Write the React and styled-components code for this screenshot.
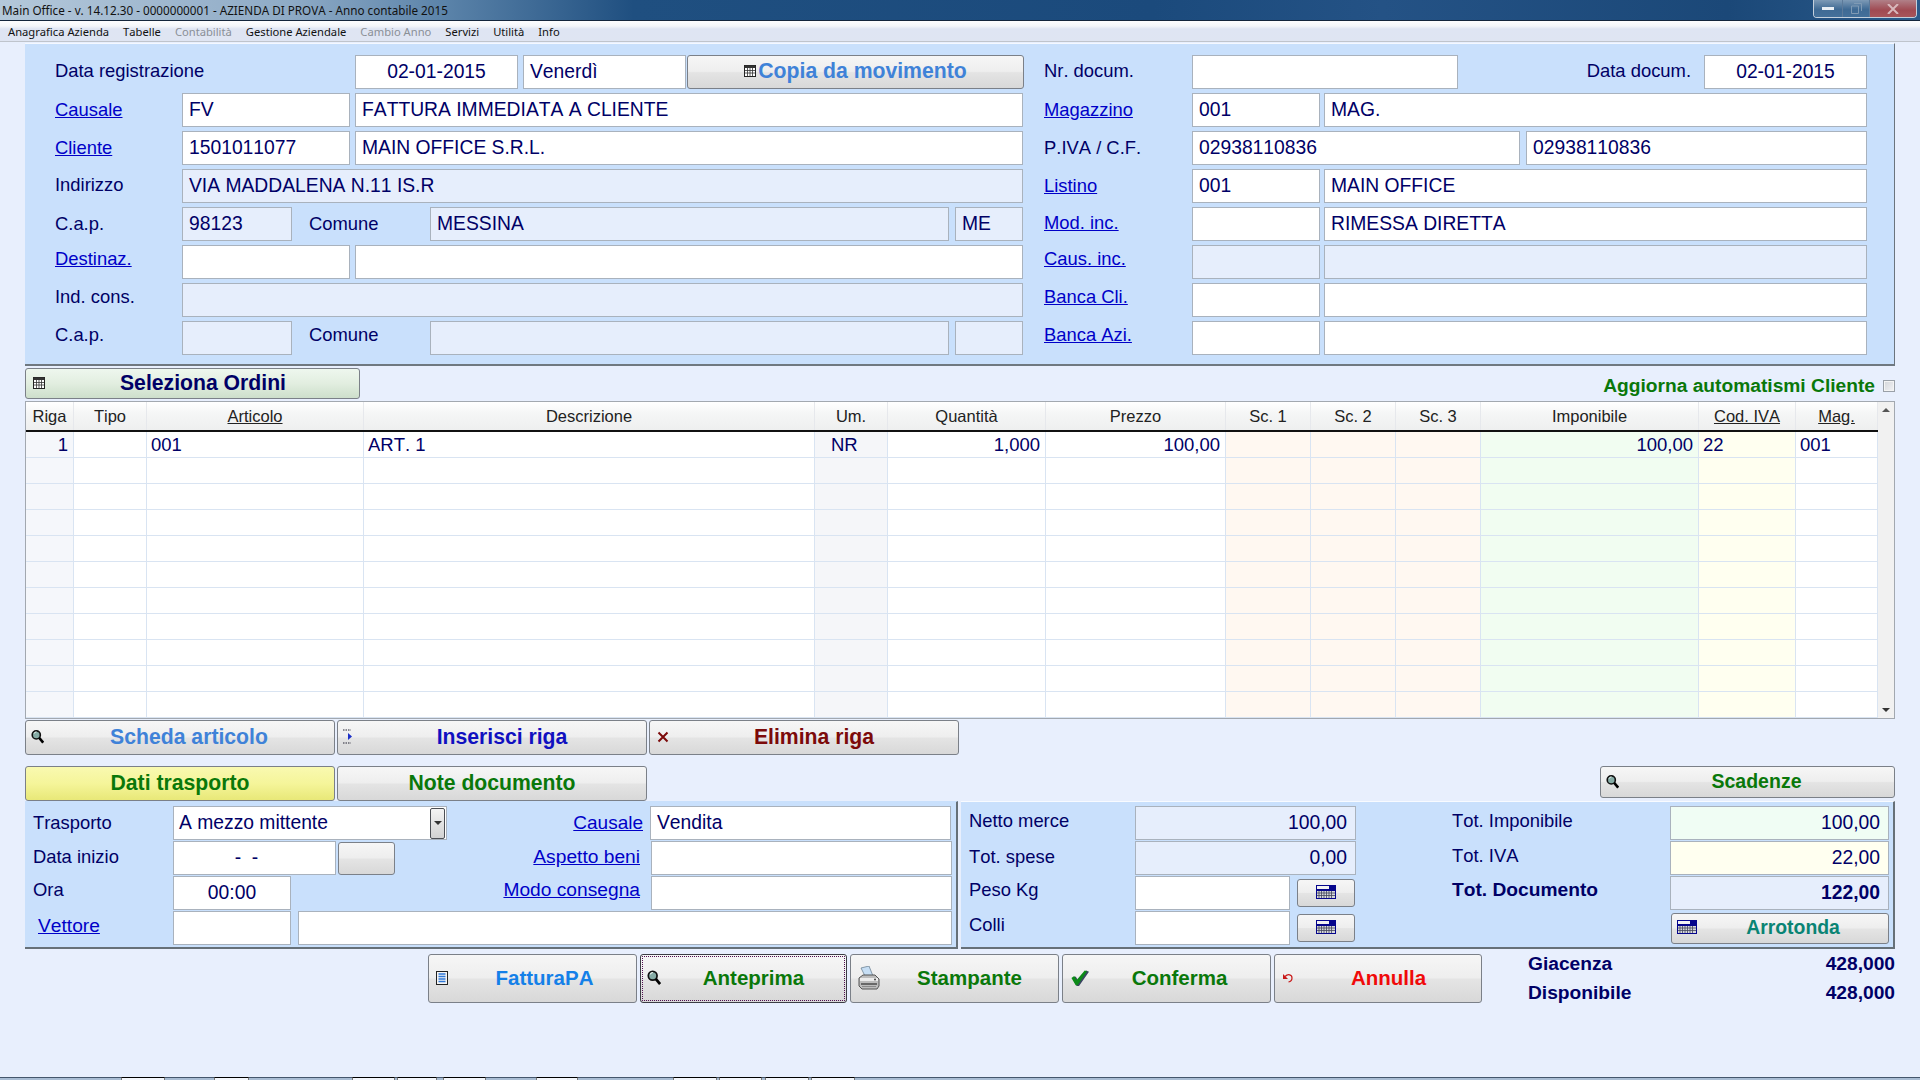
import React from 'react';
import styled, { createGlobalStyle } from 'styled-components';

const GlobalStyle = createGlobalStyle`
  * { box-sizing: border-box; font-kerning: none; }
  html, body { margin: 0; padding: 0; background: #e8effd; }
  body { font-family: "Liberation Sans", Arial, sans-serif; color: #000066; }
`;

const Page = styled.div`
  width: 1920px;
  height: 1080px;
  overflow: hidden;
  display: flex;
  flex-direction: column;
  background: #e8effd;
`;

const TitleBar = styled.div`
  height: 21px;
  display: flex;
  align-items: flex-start;
  padding-left: 2px;
  border-bottom: 1px solid #14263c;
  background: linear-gradient(90deg, #b4c8da 0%, #8fabc6 15%, #5c84aa 23%, #1f4f80 33%, #1b4a7c 60%, #245285 72%, #1b4878 90%, #2a5a8a 100%);
`;

const TitleText = styled.span`
  font-family: "Noto Sans", sans-serif;
  font-size: 11.7px;
  line-height: 20px;
  color: #111;
`;

const WinControls = styled.div`
  margin-left: auto;
  margin-right: 3px;
  display: flex;
  height: 18px;
  border: 1px solid #c4d0dc;
  border-top: none;
  border-radius: 0 0 4px 4px;
  overflow: hidden;
`;

const WinBtn = styled.div`
  width: ${p => p.$w}px;
  display: flex;
  align-items: center;
  justify-content: center;
  border-right: 1px solid #5c7a9a;
  background: ${p => p.$close
    ? 'linear-gradient(180deg, #b08088 0%, #a04a52 60%, #a8555a 100%)'
    : 'linear-gradient(180deg, #7d9ab6 0%, #3f6a94 55%, #44709a 100%)'};
  &:last-child { border-right: none; }
`;

const MenuBar = styled.div`
  height: 21px;
  display: flex;
  align-items: center;
  gap: 14px;
  padding-left: 8px;
  border-bottom: 1px solid #bfc4cc;
  background: linear-gradient(180deg, #fdfdfe 0%, #f4f6fa 25%, #dfe5f3 40%, #dfe5f2 100%);
`;

const MenuItem = styled.span`
  font-family: "Noto Sans", sans-serif;
  font-size: 11.2px;
  color: ${p => (p.$off ? '#8a8f96' : '#111')};
`;

const Content = styled.div`
  padding: 1px 25px 0;
  display: flex;
  flex-direction: column;
`;

const HeadPanel = styled.div`
  height: 323px;
  padding: 11px 27px 0 30px;
  display: flex;
  justify-content: space-between;
  background: #c9e0fc;
  border-top: 1px solid #f4f8ff;
  border-right: 1px solid #6b747e;
  border-bottom: 2px solid #6f7880;
`;

const FormCol = styled.div`
  width: ${p => p.$w}px;
  display: flex;
  flex-direction: column;
  gap: 4px;
`;

const FormRow = styled.div`
  height: 34px;
  display: flex;
  align-items: center;
`;

const Label = styled.div`
  width: ${p => p.$w}px;
  flex: none;
  margin-left: ${p => p.$ml || 0}px;
  padding-left: ${p => p.$pl || 0}px;
  padding-bottom: ${p => p.$pb || 0}px;
  font-size: ${p => p.$fs || 18.4}px;
  white-space: nowrap;
  text-align: ${p => p.$align || 'left'};
  font-weight: ${p => (p.$bold ? 'bold' : 'normal')};
  color: ${p => (p.$link ? '#0000c8' : '#000066')};
  text-decoration: ${p => (p.$link ? 'underline' : 'none')};
`;

const Field = styled.div`
  width: ${p => p.$w}px;
  height: 34px;
  flex: none;
  margin-left: ${p => p.$ml || 0}px;
  padding: 0 ${p => (p.$align === 'right' ? 8 : 6)}px;
  display: flex;
  align-items: center;
  justify-content: ${p => (p.$align === 'right' ? 'flex-end' : p.$align === 'center' ? 'center' : 'flex-start')};
  background: ${p => p.$bg || (p.$off ? '#e6eefc' : '#fff')};
  border: 1px solid #a9b2bd;
  font-size: 19.3px;
  font-weight: ${p => (p.$bold ? 'bold' : 'normal')};
  color: #000066;
  white-space: nowrap;
`;

const Btn = styled.button`
  width: ${p => (p.$w ? `${p.$w}px` : 'auto')};
  height: ${p => p.$h || 35}px;
  flex: none;
  margin: 0 0 0 ${p => p.$ml || 0}px;
  padding: 0 0 2px;
  display: flex;
  align-items: center;
  border: 1px solid ${p => (p.$focus ? '#3c3c44' : '#7b8088')};
  border-radius: 3px;
  background: ${p => {
    if (p.$tone === 'yellow') return 'linear-gradient(180deg, #f9f9b0 0%, #f5f59a 50%, #e8e878 100%)';
    if (p.$tone === 'green') return 'linear-gradient(180deg, #eef7ee 0%, #e2eee0 50%, #cddfcb 100%)';
    return 'linear-gradient(180deg, #f6f6f6 0%, #eeeeee 48%, #e4e4e4 52%, #d8d8d8 100%)';
  }};
  outline: ${p => (p.$focus ? '1px dotted #501050' : 'none')};
  outline-offset: -3px;
  font-family: "Liberation Sans", Arial, sans-serif;
  font-weight: bold;
  font-size: ${p => p.$fs || 21.2}px;
  color: ${p => p.$color || '#000066'};
`;

const BtnIcon = styled.span`
  width: ${p => p.$lead || 0}px;
  flex: none;
  display: flex;
  align-items: center;
  padding-left: ${p => (p.$pl === undefined ? 6 : p.$pl)}px;
  overflow: visible;
`;

const BtnText = styled.span`
  flex: 1;
  text-align: center;
  white-space: nowrap;
`;

const CopyBtnInner = styled.span`
  flex: 1;
  display: flex;
  align-items: center;
  justify-content: center;
  gap: 2px;
`;

const Toolbar = styled.div`
  margin-top: 2px;
  height: 31px;
  display: flex;
`;

const AutoFlag = styled.div`
  margin-left: auto;
  padding-top: 5px;
  display: flex;
  align-items: center;
  gap: 8px;
  font-size: 19.2px;
  font-weight: bold;
  color: #0a780a;
`;

const CheckBox = styled.span`
  width: 12px;
  height: 12px;
  border: 1px solid #9aa0a8;
  background: linear-gradient(135deg, #d4d6da, #f2f3f5);
  box-shadow: inset 0 0 0 1px #f4f4f4;
`;

const Table = styled.div`
  margin-top: 2px;
  height: 318px;
  display: flex;
  border: 1px solid #a2a8b0;
  background: #fff;
`;

const TableBody = styled.div`
  flex: 1;
  min-width: 0;
`;

const HeadRow = styled.div`
  height: 30px;
  display: flex;
  border-bottom: 2px solid #111;
`;

const HeadCell = styled.div`
  width: ${p => p.$w}px;
  flex: none;
  display: flex;
  align-items: center;
  justify-content: center;
  border-right: 1px solid #e6e8ec;
  background: linear-gradient(180deg, #ffffff 0%, #f5f6f6 40%, #eeefef 100%);
  font-size: 16.5px;
  color: #222;
  text-decoration: ${p => (p.$under ? 'underline' : 'none')};
`;

const DataRow = styled.div`
  height: 26px;
  display: flex;
`;

const DataCell = styled.div`
  width: ${p => p.$w}px;
  flex: none;
  padding: 0 ${p => (p.$right ? 5 : 4)}px 0 ${p => p.$indent || 4}px;
  display: flex;
  align-items: center;
  justify-content: ${p => (p.$right ? 'flex-end' : 'flex-start')};
  background: ${p => p.$bg || '#fff'};
  border-right: 1px solid #d9e4f2;
  border-bottom: 1px solid #d9e4f2;
  font-size: 18.5px;
  color: #000066;
`;

const ScrollTrack = styled.div`
  width: 16px;
  flex: none;
  display: flex;
  flex-direction: column;
  justify-content: space-between;
  align-items: center;
  padding: 6px 0;
  background: #f1f1f1;
`;

const ArrowUp = styled.span`
  width: 0;
  height: 0;
  border-left: 4px solid transparent;
  border-right: 4px solid transparent;
  border-bottom: 4px solid #555;
`;

const ArrowDown = styled.span`
  width: 0;
  height: 0;
  border-left: 4px solid transparent;
  border-right: 4px solid transparent;
  border-top: 4px solid #333;
`;

const BtnRow = styled.div`
  margin-top: 1px;
  display: flex;
  gap: 2px;
`;

const TabRow = styled.div`
  margin-top: 11px;
  height: 35px;
  display: flex;
  gap: 2px;
`;

const LowerPanels = styled.div`
  height: 148px;
  display: flex;
  gap: 3px;
`;

const LowerPanel = styled.div`
  width: ${p => p.$w}px;
  padding: 4px 0 0 ${p => p.$pl}px;
  display: flex;
  flex-direction: column;
  gap: 1px;
  background: #c9e0fc;
  border-top: 1px solid ${p => (p.$white ? '#f8fbff' : '#c9e0fc')};
  border-right: 2px solid #667078;
  border-bottom: 2px solid #667078;
`;

const Combo = styled(Field)`
  padding: 0 1px 0 5px;
  justify-content: space-between;
`;

const ComboBtn = styled.span`
  width: 15px;
  height: 31px;
  display: flex;
  align-items: center;
  justify-content: center;
  border: 1px solid #4c4f55;
  border-radius: 2px;
  background: linear-gradient(180deg, #f4f4f4, #d2d2d2);
`;

const ActionRow = styled.div`
  display: flex;
  align-items: flex-start;
`;

const Actions = styled.div`
  margin-top: 5px;
  margin-left: 403px;
  display: flex;
  gap: 3px;
`;

const Stock = styled.div`
  width: 367px;
  margin-left: 46px;
  display: flex;
  flex-direction: column;
`;

const StockLine = styled.div`
  height: 29px;
  display: flex;
  align-items: center;
  justify-content: space-between;
  font-size: 19.2px;
  font-weight: bold;
  color: #000066;
`;

const Footer = styled.div`
  margin-top: auto;
  height: 3px;
  display: flex;
  background: #a9bdd4;
  border-top: 1px solid #44566c;
`;

const FooterGap = styled.span`
  width: ${p => p.$w}px;
  flex: none;
`;

const FooterTab = styled.span`
  width: ${p => p.$w}px;
  flex: none;
  margin-top: -1px;
  background: #f4f7fc;
  border-top: 1px solid #000;
  border-left: 1px solid #777;
  border-right: 1px solid #777;
`;

const MagIcon = () => (
  <svg width="16" height="17" viewBox="0 0 16 17">
    <circle cx="6.500" cy="6.500" r="5" fill="#86aca6" stroke="#111" strokeWidth="2" />
    <path d="M3.800 5a3 3 0 0 1 3-2.200" fill="none" stroke="#eef6f2" strokeWidth="1.200" />
    <path d="M10 10L15 16" stroke="#000" strokeWidth="3.200" />
  </svg>
);

const GridIcon = () => (
  <svg width="12" height="12" viewBox="0 0 12 12">
    <rect x="0.5" y="0.5" width="11" height="11" fill="#fff" stroke="#222" />
    <rect x="0.5" y="0.5" width="11" height="2.5" fill="#333" />
    <path d="M3.500 3v8M6 3v8M8.500 3v8M1 5.500h10M1 8h10" stroke="#333" strokeWidth="0.8" />
  </svg>
);

const CalcIcon = () => (
  <svg width="20" height="14" viewBox="0 0 20 14">
    <rect width="20" height="14" fill="#05058c" />
    <rect x="1" y="1" width="12" height="3" fill="#f2f2f2" />
    <rect x="1" y="6" width="18" height="7" fill="#d6d8dc" />
    <path d="M3 6v7M5.500 6v7M8 6v7M10.500 6v7M13 6v7M15.500 6v7M1 8h18M1 10.500h18" stroke="#44465c" strokeWidth="0.8" />
  </svg>
);

const ListIcon = () => (
  <svg width="12" height="14" viewBox="0 0 12 14">
    <rect x="0.5" y="0.5" width="11" height="13" fill="#f4f4f4" stroke="#222" />
    <path d="M2.500 3h7M2.500 5.500h7M2.500 8h7M2.500 10.500h7" stroke="#2f78d8" strokeWidth="1.400" />
  </svg>
);

const InsertIcon = () => (
  <svg width="11" height="15" viewBox="0 0 11 15">
    <path d="M0 1h8M0 14h8" stroke="#223" strokeWidth="1" strokeDasharray="1.500 1" />
    <path d="M5 4l4 3.500-4 3.500z" fill="#1c30c8" />
  </svg>
);

const CrossIcon = () => (
  <svg width="12" height="12" viewBox="0 0 12 12">
    <path d="M1.500 1.500l9 9M10.500 1.500l-9 9" stroke="#7c0a0a" strokeWidth="2" />
  </svg>
);

const PrinterIcon = () => (
  <svg width="22" height="24" viewBox="0 0 22 24">
    <path d="M3 2l8-2 4 10H7z" fill="#c6def4" stroke="#6f8496" strokeWidth="0.800" />
    <path d="M1 12l4-3h12l4 4v7l-2 3H4l-3-3z" fill="#bdbdbd" stroke="#555" />
    <path d="M2 12h18v3H2z" fill="#ececec" />
    <path d="M3 18h16" stroke="#444" strokeWidth="1.400" />
    <path d="M4 20.500h14" stroke="#8a8a8a" strokeWidth="1" />
    <circle cx="17" cy="13.500" r="1" fill="#444" />
  </svg>
);

const CheckIcon = () => (
  <svg width="20" height="18" viewBox="0 0 20 18">
    <path d="M3 9.500l3-2 2.500 4L17 1l3 1.500L9.500 17.500H7z" fill="#3a4660" />
    <path d="M1.500 9l3-2 2.500 4L15.500 1l2.500 1L8 16.500H6z" fill="#0c8a18" />
  </svg>
);

const UndoIcon = () => (
  <svg width="12" height="10" viewBox="0 0 12 10">
    <path d="M3 3.500c3-3 7-2 7 1.500 0 2-1.500 3.500-3.500 4" fill="none" stroke="#c81818" strokeWidth="1.200" />
    <path d="M1 1v5h5z" fill="#c81818" />
  </svg>
);

const columns = [
  { w: 48, label: 'Riga', bg: '#f5f7fb', right: true },
  { w: 73, label: 'Tipo' },
  { w: 217, label: 'Articolo', under: true },
  { w: 451, label: 'Descrizione' },
  { w: 73, label: 'Um.', bg: '#f5f6f9', indent: 16 },
  { w: 158, label: 'Quantità', right: true },
  { w: 180, label: 'Prezzo', right: true },
  { w: 85, label: 'Sc. 1', bg: '#fff8f1' },
  { w: 85, label: 'Sc. 2', bg: '#fff8f1' },
  { w: 85, label: 'Sc. 3', bg: '#fff8f1' },
  { w: 218, label: 'Imponibile', bg: '#f1fdf1', right: true },
  { w: 97, label: 'Cod. IVA', bg: '#fffff0', under: true },
  { w: 82, label: 'Mag.', under: true },
];

const firstRow = ['1', '', '001', 'ART. 1', 'NR', '1,000', '100,00', '', '', '', '100,00', '22', '001'];
const rows = Array.from({ length: 11 }, (_, i) => (i === 0 ? firstRow : columns.map(() => '')));

const menu = [
  ['Anagrafica Azienda'], ['Tabelle'], ['Contabilità', true], ['Gestione Aziendale'],
  ['Cambio Anno', true], ['Servizi'], ['Utilità'], ['Info'],
];

const footerTabs = [[121, 165], [214, 249], [352, 395], [397, 437], [443, 486], [536, 578], [673, 717], [719, 762], [765, 809], [811, 855]];

export default function App() {
  let footerX = 0;
  return (
    <Page>
      <GlobalStyle />
      <TitleBar>
        <TitleText>Main Office - v. 14.12.30 - 0000000001 - AZIENDA DI PROVA - Anno contabile 2015</TitleText>
        <WinControls>
          <WinBtn $w={29}>
            <svg width="12" height="5"><rect y="1" width="12" height="3" fill="#e8eef4" /></svg>
          </WinBtn>
          <WinBtn $w={27}>
            <svg width="11" height="11" viewBox="0 0 11 11"><path d="M3 .5h7.500V8M.5 3h7v7.500h-7z" fill="none" stroke="#7f9ab4" /></svg>
          </WinBtn>
          <WinBtn $w={46} $close>
            <svg width="12" height="10" viewBox="0 0 12 10"><path d="M1 0l10 10M11 0L1 10" stroke="#d8b8bc" strokeWidth="2" /></svg>
          </WinBtn>
        </WinControls>
      </TitleBar>
      <MenuBar>
        {menu.map(([t, off]) => <MenuItem key={t} $off={off}>{t}</MenuItem>)}
      </MenuBar>
      <Content>
        <HeadPanel>
          <FormCol $w={968}>
            <FormRow>
              <Label $w={300} $pb={2}>Data registrazione</Label>
              <Field $w={163} $align="center">02-01-2015</Field>
              <Field $w={163} $ml={5}>Venerdì</Field>
              <Btn $w={337} $h={34} $ml={1} $color="#3f82d8">
                <CopyBtnInner><GridIcon />Copia da movimento</CopyBtnInner>
              </Btn>
            </FormRow>
            <FormRow>
              <Label $w={127} $link>Causale</Label>
              <Field $w={168}>FV</Field>
              <Field $w={668} $ml={5}>FATTURA IMMEDIATA A CLIENTE</Field>
            </FormRow>
            <FormRow>
              <Label $w={127} $link>Cliente</Label>
              <Field $w={168}>1501011077</Field>
              <Field $w={668} $ml={5}>MAIN OFFICE S.R.L.</Field>
            </FormRow>
            <FormRow>
              <Label $w={127} $pb={2}>Indirizzo</Label>
              <Field $w={841} $off>VIA MADDALENA N.11 IS.R</Field>
            </FormRow>
            <FormRow>
              <Label $w={127}>C.a.p.</Label>
              <Field $w={110} $off>98123</Field>
              <Label $w={121} $ml={17}>Comune</Label>
              <Field $w={519} $off>MESSINA</Field>
              <Field $w={68} $ml={6} $off>ME</Field>
            </FormRow>
            <FormRow>
              <Label $w={127} $pb={6} $link>Destinaz.</Label>
              <Field $w={168} />
              <Field $w={668} $ml={5} />
            </FormRow>
            <FormRow>
              <Label $w={127} $pb={6}>Ind. cons.</Label>
              <Field $w={841} $off />
            </FormRow>
            <FormRow>
              <Label $w={127} $pb={6}>C.a.p.</Label>
              <Field $w={110} $off />
              <Label $w={121} $ml={17} $pb={6}>Comune</Label>
              <Field $w={519} $off />
              <Field $w={68} $ml={6} $off />
            </FormRow>
          </FormCol>
          <FormCol $w={823}>
            <FormRow>
              <Label $w={148} $pb={2}>Nr. docum.</Label>
              <Field $w={266} />
              <Label $w={233} $align="right" $pb={2}>Data docum.</Label>
              <Field $w={163} $ml={13} $align="center">02-01-2015</Field>
            </FormRow>
            <FormRow>
              <Label $w={148} $link>Magazzino</Label>
              <Field $w={128}>001</Field>
              <Field $w={543} $ml={4}>MAG.</Field>
            </FormRow>
            <FormRow>
              <Label $w={148}>P.IVA / C.F.</Label>
              <Field $w={328}>02938110836</Field>
              <Field $w={341} $ml={6}>02938110836</Field>
            </FormRow>
            <FormRow>
              <Label $w={148} $link>Listino</Label>
              <Field $w={128}>001</Field>
              <Field $w={543} $ml={4}>MAIN OFFICE</Field>
            </FormRow>
            <FormRow>
              <Label $w={148} $link $pb={3}>Mod. inc.</Label>
              <Field $w={128} />
              <Field $w={543} $ml={4}>RIMESSA DIRETTA</Field>
            </FormRow>
            <FormRow>
              <Label $w={148} $link $pb={6}>Caus. inc.</Label>
              <Field $w={128} $off />
              <Field $w={543} $ml={4} $off />
            </FormRow>
            <FormRow>
              <Label $w={148} $link $pb={6}>Banca Cli.</Label>
              <Field $w={128} />
              <Field $w={543} $ml={4} />
            </FormRow>
            <FormRow>
              <Label $w={148} $link $pb={6}>Banca Azi.</Label>
              <Field $w={128} />
              <Field $w={543} $ml={4} />
            </FormRow>
          </FormCol>
        </HeadPanel>

        <Toolbar>
          <Btn $w={335} $h={31} $tone="green">
            <BtnIcon $lead={21} $pl={7}><GridIcon /></BtnIcon>
            <BtnText>Seleziona Ordini</BtnText>
          </Btn>
          <AutoFlag>Aggiorna automatismi Cliente<CheckBox /></AutoFlag>
        </Toolbar>

        <Table>
          <TableBody>
            <HeadRow>
              {columns.map(c => <HeadCell key={c.label} $w={c.w} $under={c.under}>{c.label}</HeadCell>)}
            </HeadRow>
            {rows.map((row, i) => (
              <DataRow key={i}>
                {row.map((v, j) => (
                  <DataCell key={j} $w={columns[j].w} $bg={columns[j].bg} $right={columns[j].right} $indent={columns[j].indent}>{v}</DataCell>
                ))}
              </DataRow>
            ))}
          </TableBody>
          <ScrollTrack><ArrowUp /><ArrowDown /></ScrollTrack>
        </Table>

        <BtnRow>
          <Btn $w={310} $color="#3f82d8">
            <BtnIcon $lead={18} $pl={5}><MagIcon /></BtnIcon>
            <BtnText>Scheda articolo</BtnText>
          </Btn>
          <Btn $w={310} $color="#1010c0">
            <BtnIcon $lead={20} $pl={5}><InsertIcon /></BtnIcon>
            <BtnText>Inserisci riga</BtnText>
          </Btn>
          <Btn $w={310} $color="#7c0a0a">
            <BtnIcon $lead={20} $pl={7}><CrossIcon /></BtnIcon>
            <BtnText>Elimina riga</BtnText>
          </Btn>
        </BtnRow>

        <TabRow>
          <Btn $w={310} $tone="yellow" $color="#0a780a"><BtnText>Dati trasporto</BtnText></Btn>
          <Btn $w={310} $color="#0a780a"><BtnText>Note documento</BtnText></Btn>
          <Btn $w={295} $h={32} $ml={951} $fs={19.5} $color="#0a780a">
            <BtnIcon $lead={18} $pl={5}><MagIcon /></BtnIcon>
            <BtnText>Scadenze</BtnText>
          </Btn>
        </TabRow>

        <LowerPanels>
          <LowerPanel $w={933} $pl={8}>
            <FormRow>
              <Label $w={140}>Trasporto</Label>
              <Combo $w={274}>A mezzo mittente<ComboBtn><ArrowDown /></ComboBtn></Combo>
              <Label $w={196} $align="right" $fs={19} $link>Causale</Label>
              <Field $w={301} $ml={7}>Vendita</Field>
            </FormRow>
            <FormRow>
              <Label $w={140} $pb={2}>Data inizio</Label>
              <Field $w={163} $align="center">{'-\u00a0\u00a0-\u00a0\u00a0\u00a0'}</Field>
              <Btn $w={57} $h={33} $ml={2} />
              <Label $w={245} $align="right" $fs={19.2} $link $pb={2}>Aspetto beni</Label>
              <Field $w={301} $ml={11} />
            </FormRow>
            <FormRow>
              <Label $w={140} $pb={6}>Ora</Label>
              <Field $w={118} $align="center">00:00</Field>
              <Label $w={349} $align="right" $fs={19.2} $link $pb={6}>Modo consegna</Label>
              <Field $w={301} $ml={11} />
            </FormRow>
            <FormRow>
              <Label $w={140} $pl={5} $pb={5} $fs={19.2} $link>Vettore</Label>
              <Field $w={118} />
              <Field $w={654} $ml={7} />
            </FormRow>
          </LowerPanel>
          <LowerPanel $w={934} $pl={8} $white>
            <FormRow>
              <Label $w={166} $pb={4}>Netto merce</Label>
              <Field $w={221} $off $align="right">100,00</Field>
              <Label $w={218} $ml={96} $pb={4}>Tot. Imponibile</Label>
              <Field $w={219} $bg="#f0fdf4" $align="right">100,00</Field>
            </FormRow>
            <FormRow>
              <Label $w={166} $pb={3}>Tot. spese</Label>
              <Field $w={221} $off $align="right">0,00</Field>
              <Label $w={218} $ml={96} $pb={5}>Tot. IVA</Label>
              <Field $w={219} $bg="#fffff0" $align="right">22,00</Field>
            </FormRow>
            <FormRow>
              <Label $w={166} $pb={6}>Peso Kg</Label>
              <Field $w={155} />
              <Btn $w={58} $h={28} $ml={7}>
                <BtnText><CalcIcon /></BtnText>
              </Btn>
              <Label $w={218} $ml={97} $pb={6} $fs={19.2} $bold>Tot. Documento</Label>
              <Field $w={219} $off $bold $align="right">122,00</Field>
            </FormRow>
            <FormRow>
              <Label $w={166} $pb={6}>Colli</Label>
              <Field $w={155} />
              <Btn $w={58} $h={28} $ml={7}>
                <BtnText><CalcIcon /></BtnText>
              </Btn>
              <Label $w={218} $ml={97} />
              <Btn $w={218} $h={31} $ml={1} $fs={19.4} $color="#0a8474">
                <BtnIcon $lead={26} $pl={5}><CalcIcon /></BtnIcon>
                <BtnText>Arrotonda</BtnText>
              </Btn>
            </FormRow>
          </LowerPanel>
        </LowerPanels>

        <ActionRow>
          <Actions>
            <Btn $w={209} $h={49} $fs={20.5} $color="#1480e8">
              <BtnIcon $lead={24} $pl={7}><ListIcon /></BtnIcon>
              <BtnText>FatturaPA</BtnText>
            </Btn>
            <Btn $w={207} $h={49} $fs={20.5} $color="#0a780a" $focus>
              <BtnIcon $lead={20} $pl={6}><MagIcon /></BtnIcon>
              <BtnText>Anteprima</BtnText>
            </Btn>
            <Btn $w={209} $h={49} $fs={20.5} $color="#0a780a">
              <BtnIcon $lead={30} $pl={7}><PrinterIcon /></BtnIcon>
              <BtnText>Stampante</BtnText>
            </Btn>
            <Btn $w={209} $h={49} $fs={20.5} $color="#0a780a">
              <BtnIcon $lead={26} $pl={7}><CheckIcon /></BtnIcon>
              <BtnText>Conferma</BtnText>
            </Btn>
            <Btn $w={208} $h={49} $fs={20.5} $color="#f00a0a">
              <BtnIcon $lead={21} $pl={7}><UndoIcon /></BtnIcon>
              <BtnText>Annulla</BtnText>
            </Btn>
          </Actions>
          <Stock>
            <StockLine><span>Giacenza</span><span>428,000</span></StockLine>
            <StockLine><span>Disponibile</span><span>428,000</span></StockLine>
          </Stock>
        </ActionRow>
      </Content>
      <Footer>
        {footerTabs.map(([a, b]) => {
          const gap = a - footerX;
          footerX = b;
          return (
            <React.Fragment key={a}>
              <FooterGap $w={gap} />
              <FooterTab $w={b - a} />
            </React.Fragment>
          );
        })}
      </Footer>
    </Page>
  );
}
